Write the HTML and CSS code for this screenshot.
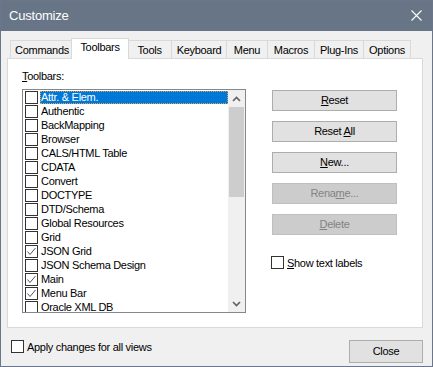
FILE: index.html
```html
<!DOCTYPE html>
<html lang="en">
<head>
    <meta charset="UTF-8">
    <title>Customize</title>
    <link rel="stylesheet" href="styles.css">
</head>
<body>
    <div class="dialog">
        <div class="titlebar">
            <span class="title">Customize</span>
            <svg class="close-x" width="11" height="11" viewBox="0 0 11 11">
                <path d="M0.5 0.5 L10.5 10.5 M10.5 0.5 L0.5 10.5" stroke="#fff" stroke-width="1.1" fill="none"/>
            </svg>
        </div>

        <div class="content">
            <div class="tabs">
                <div class="tab tab-commands">Commands</div>
                <div class="tab tab-toolbars active">Toolbars</div>
                <div class="tab tab-tools">Tools</div>
                <div class="tab tab-keyboard">Keyboard</div>
                <div class="tab tab-menu">Menu</div>
                <div class="tab tab-macros">Macros</div>
                <div class="tab tab-plugins">Plug-Ins</div>
                <div class="tab tab-options">Options</div>
            </div>

            <div class="panel">
                <div class="left">
                    <div class="label"><u>T</u>oolbars:</div>
                    <div class="listbox">
                        <ul class="items">
                            <li class="item selected"><span class="box"></span><span class="text">Attr. &amp; Elem.</span></li>
                            <li class="item"><span class="box"></span><span class="text">Authentic</span></li>
                            <li class="item"><span class="box"></span><span class="text">BackMapping</span></li>
                            <li class="item"><span class="box"></span><span class="text">Browser</span></li>
                            <li class="item"><span class="box"></span><span class="text">CALS/HTML Table</span></li>
                            <li class="item"><span class="box"></span><span class="text">CDATA</span></li>
                            <li class="item"><span class="box"></span><span class="text">Convert</span></li>
                            <li class="item"><span class="box"></span><span class="text">DOCTYPE</span></li>
                            <li class="item"><span class="box"></span><span class="text">DTD/Schema</span></li>
                            <li class="item"><span class="box"></span><span class="text">Global Resources</span></li>
                            <li class="item"><span class="box"></span><span class="text">Grid</span></li>
                            <li class="item"><span class="box checked"><svg width="11" height="11" viewBox="0 0 11 11"><polyline points="1.5,5.5 4,8.5 9.5,2" fill="none" stroke="#555" stroke-width="1"/></svg></span><span class="text">JSON Grid</span></li>
                            <li class="item"><span class="box"></span><span class="text">JSON Schema Design</span></li>
                            <li class="item"><span class="box checked"><svg width="11" height="11" viewBox="0 0 11 11"><polyline points="1.5,5.5 4,8.5 9.5,2" fill="none" stroke="#555" stroke-width="1"/></svg></span><span class="text">Main</span></li>
                            <li class="item"><span class="box checked"><svg width="11" height="11" viewBox="0 0 11 11"><polyline points="1.5,5.5 4,8.5 9.5,2" fill="none" stroke="#555" stroke-width="1"/></svg></span><span class="text">Menu Bar</span></li>
                            <li class="item"><span class="box"></span><span class="text">Oracle XML DB</span></li>
                        </ul>
                        <div class="scrollbar">
                            <div class="arrow">
                                <svg width="9" height="6" viewBox="0 0 9 6"><polyline points="1,5 4.5,1.5 8,5" fill="none" stroke="#606060" stroke-width="1.6"/></svg>
                            </div>
                            <div class="thumb"></div>
                            <div class="track"></div>
                            <div class="arrow">
                                <svg width="9" height="6" viewBox="0 0 9 6"><polyline points="1,1 4.5,4.5 8,1" fill="none" stroke="#606060" stroke-width="1.6"/></svg>
                            </div>
                        </div>
                    </div>
                </div>

                <div class="right">
                    <div class="btn"><u>R</u>eset</div>
                    <div class="btn">Reset <u>A</u>ll</div>
                    <div class="btn"><u>N</u>ew...</div>
                    <div class="btn disabled">Rena<u>m</u>e...</div>
                    <div class="btn disabled"><u>D</u>elete</div>
                    <div class="check show-labels"><span class="box"></span><span><u>S</u>how text labels</span></div>
                </div>
            </div>

            <div class="footer">
                <div class="check"><span class="box"></span><span>Apply changes for all views</span></div>
                <div class="btn close-btn">Close</div>
            </div>
        </div>
    </div>
</body>
</html>
```

FILE: styles.css
```css
* {
    box-sizing: border-box;
}

body {
    margin: 0;
    font-family: "Liberation Sans", Arial, sans-serif;
    font-size: 11px;
    letter-spacing: -0.3px;
    color: #000;
    background: #fff;
}

.dialog {
    width: 433px;
    height: 367px;
    border: 1px solid #6b7789;
    background: #f0f0f0;
    display: flex;
    flex-direction: column;
}

.titlebar {
    height: 30px;
    flex: none;
    background: #677587;
    display: flex;
    align-items: center;
    justify-content: space-between;
    padding: 0 10px 0 8px;
}

.title {
    color: #fff;
    font-size: 13px;
    letter-spacing: -0.2px;
    margin-top: -1px;
}

.close-x {
    margin-top: -1px;
}

.content {
    flex: 1;
    padding: 7px 9px 0 6px;
}

/* tab strip */
.tabs {
    display: flex;
    align-items: flex-end;
    height: 21px;
    margin: 0 0 -1px 3px;
    position: relative;
    z-index: 1;
}

.tab {
    height: 18px;
    margin-bottom: 1px;
    border: 1px solid #d9d9d9;
    border-bottom: none;
    border-right: none;
    background: #f0f0f0;
    text-align: center;
    line-height: 18px;
    white-space: nowrap;
}

.tab.active {
    height: 21px;
    margin: 0 -2px;
    border-right: 1px solid #d9d9d9;
    background: #fff;
    line-height: 16px;
    position: relative;
}

.tab-commands { width: 63px; }
.tab-toolbars { width: 58px; }
.tab-tools { width: 44px; }
.tab-keyboard { width: 55px; }
.tab-menu { width: 41px; }
.tab-macros { width: 47px; }
.tab-plugins { width: 49px; }
.tab-options { width: 48px; border-right: 1px solid #d9d9d9; }

/* tab page */
.panel {
    height: 270px;
    background: #fff;
    border: 1px solid #d9d9d9;
    display: flex;
    padding: 11px 0 0 14px;
}

.label {
    height: 13px;
    line-height: 13px;
    margin-bottom: 6px;
}

.listbox {
    width: 224px;
    height: 224px;
    border: 1px solid #828790;
    display: flex;
    background: #fff;
}

.items {
    flex: 1;
    list-style: none;
    margin: 0;
    padding: 1px 0 0 2px;
    overflow: hidden;
}

.item {
    display: flex;
    height: 14px;
    white-space: nowrap;
}

.box {
    width: 13px;
    height: 13px;
    flex: none;
    border: 1px solid #333;
    background: #fff;
    display: flex;
}

.item .text {
    height: 13px;
    line-height: 13px;
    margin-left: 2px;
    padding: 0 1px;
}

.item.selected .text {
    flex: 1;
    background: #0078d7;
    color: #fff;
    outline: 1px dotted #f0a040;
    outline-offset: -1px;
}

.scrollbar {
    width: 17px;
    flex: none;
    background: #f0f0f0;
    display: flex;
    flex-direction: column;
}

.arrow {
    height: 17px;
    display: flex;
    align-items: center;
    justify-content: center;
}

.thumb {
    height: 90px;
    margin: 0 1px;
    background: #cdcdcd;
}

.track {
    flex: 1;
}

/* buttons column */
.right {
    margin: 20px 0 0 26px;
}

.btn {
    width: 125px;
    height: 21px;
    margin-bottom: 10px;
    border: 1px solid #adadad;
    background: #e1e1e1;
    text-align: center;
    line-height: 19px;
}

.btn.disabled {
    background: #cccccc;
    border-color: #bfbfbf;
    color: #838383;
}

.check {
    display: flex;
    align-items: center;
    white-space: nowrap;
}

.check .box {
    margin-right: 3px;
}

.show-labels {
    margin: 21px 0 0 -1px;
}

/* bottom row */
.footer {
    display: flex;
    justify-content: space-between;
    align-items: flex-start;
    padding: 12px 0 0 4px;
}

.close-btn {
    width: 74px;
    height: 23px;
    line-height: 21px;
    margin: 0;
}
```
